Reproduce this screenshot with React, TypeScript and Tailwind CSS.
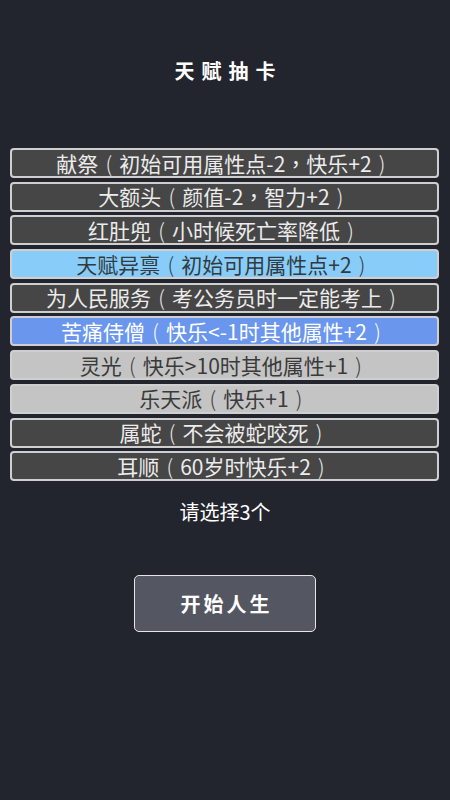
import React from "react";

type Item = { text: string; kind: "dark" | "sky" | "blue" | "gray" };

const items: Item[] = [
  { text: "献祭（初始可用属性点-2，快乐+2）", kind: "dark" },
  { text: "大额头（颜值-2，智力+2）", kind: "dark" },
  { text: "红肚兜（小时候死亡率降低）", kind: "dark" },
  { text: "天赋异禀（初始可用属性点+2）", kind: "sky" },
  { text: "为人民服务（考公务员时一定能考上）", kind: "dark" },
  { text: "苦痛侍僧（快乐<-1时其他属性+2）", kind: "blue" },
  { text: "灵光（快乐>10时其他属性+1）", kind: "gray" },
  { text: "乐天派（快乐+1）", kind: "gray" },
  { text: "属蛇（不会被蛇咬死）", kind: "dark" },
  { text: "耳顺（60岁时快乐+2）", kind: "dark" },
];

const kindClass: Record<Item["kind"], string> = {
  dark: "bg-[#464646] text-[#ececec]",
  sky: "bg-[#88cdf9] text-[#333a40]",
  blue: "bg-[#6a96ed] text-white",
  gray: "bg-[#c4c4c4] text-[#3a3a3a]",
};

function Label({ text }: { text: string }) {
  const parts = text.split(/([（），])/);
  return (
    <>
      {parts.map((p, i) => {
        if (p === "（" || p === "）")
          return (
            <span key={i} className="inline-block w-[21px] text-center font-light">
              {p === "（" ? "(" : ")"}
            </span>
          );
        if (p === "，")
          return (
            <span
              key={i}
              className="inline-block w-[21px] text-center"
              style={{ fontFamily: '"Noto Sans CJK TC", sans-serif' }}
            >
              ，
            </span>
          );
        return <span key={i}>{p}</span>;
      })}
    </>
  );
}

export default function App() {
  return (
    <div
      className="w-[450px] h-[800px] bg-[#22252e] flex flex-col items-center"
      style={{ fontFamily: '"Noto Sans CJK SC", "Noto Sans", sans-serif' }}
    >
      <div className="mt-[56px] h-[30px] leading-[30px] text-[20px] font-bold text-white tracking-[7px] pl-[7px]">
        天赋抽卡
      </div>
      <div className="mt-[62px] w-full pl-[10px] pr-[11px] flex flex-col gap-[3.7px]">
        {items.map((it, i) => (
          <div
            key={i}
            className={`h-[30px] rounded-[4px] border-2 border-[#cfcfcf] flex items-center justify-center text-[21px] leading-none whitespace-nowrap ${kindClass[it.kind]}`}
          >
            <Label text={it.text} />
          </div>
        ))}
      </div>
      <div className="mt-[16px] h-[30px] leading-[30px] text-[20px] text-white">
        请选择3个
      </div>
      <button className="mt-[48px] w-[182px] h-[57px] rounded-[5px] border-[1.5px] border-[#e6e6e6] bg-[#545661] text-white text-[20px] font-bold tracking-[3px] pl-[3px]">
        开始人生
      </button>
    </div>
  );
}
